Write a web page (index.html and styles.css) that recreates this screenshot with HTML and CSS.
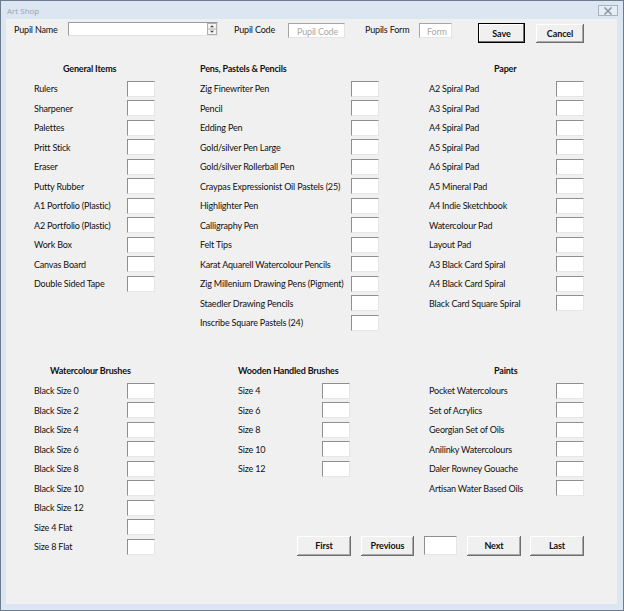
FILE: index.html
```html
<!DOCTYPE html>
<html>
<head>
<meta charset="utf-8">
<title>Art Shop</title>
<link rel="stylesheet" href="styles.css">
</head>
<body>
<div class="window">
  <div class="titlebar">
    <span class="title">Art Shop</span>
    <span class="close"><svg width="10" height="8" viewBox="0 0 10 8"><path d="M1.5 0.5 L8.5 7.5 M8.5 0.5 L1.5 7.5" stroke="#8a96a4" stroke-width="1.6"/></svg></span>
  </div>
  <div class="client">
    <div class="topbar">
      <span class="lbl l-name">Pupil Name</span>
      <div class="combo"><span class="spin"><svg width="10" height="12" viewBox="0 0 10 12"><rect x="0.5" y="0.5" width="9" height="11" fill="#f4f4f4" stroke="#b0b0b0"/><line x1="0.5" y1="6" x2="9.5" y2="6" stroke="#b0b0b0"/><path d="M3 4.2 L5 2.2 L7 4.2 Z" fill="#444"/><path d="M3 7.8 L5 9.8 L7 7.8 Z" fill="#444"/></svg></span></div>
      <span class="lbl l-code">Pupil Code</span>
      <div class="field f-code">Pupil Code</div>
      <span class="lbl l-form">Pupils Form</span>
      <div class="field f-form">Form</div>
      <button class="btn b-save">Save</button>
      <button class="btn b-cancel">Cancel</button>
    </div>

    <div class="group g-top">
      <div class="sec s1">
        <div class="hdr h-general">General Items</div>
        <div class="row"><span>Rulers</span><i class="box"></i></div>
        <div class="row"><span>Sharpener</span><i class="box"></i></div>
        <div class="row"><span>Palettes</span><i class="box"></i></div>
        <div class="row"><span>Pritt Stick</span><i class="box"></i></div>
        <div class="row"><span>Eraser</span><i class="box"></i></div>
        <div class="row"><span>Putty Rubber</span><i class="box"></i></div>
        <div class="row"><span>A1 Portfolio (Plastic)</span><i class="box"></i></div>
        <div class="row"><span>A2 Portfolio (Plastic)</span><i class="box"></i></div>
        <div class="row"><span>Work Box</span><i class="box"></i></div>
        <div class="row"><span>Canvas Board</span><i class="box"></i></div>
        <div class="row"><span>Double Sided Tape</span><i class="box"></i></div>
      </div>
      <div class="sec s2">
        <div class="hdr h-pens">Pens, Pastels &amp; Pencils</div>
        <div class="row"><span>Zig Finewriter Pen</span><i class="box"></i></div>
        <div class="row"><span>Pencil</span><i class="box"></i></div>
        <div class="row"><span>Edding Pen</span><i class="box"></i></div>
        <div class="row"><span>Gold/silver Pen Large</span><i class="box"></i></div>
        <div class="row"><span>Gold/silver Rollerball Pen</span><i class="box"></i></div>
        <div class="row"><span>Craypas Expressionist Oil Pastels (25)</span><i class="box"></i></div>
        <div class="row"><span>Highlighter Pen</span><i class="box"></i></div>
        <div class="row"><span>Calligraphy Pen</span><i class="box"></i></div>
        <div class="row"><span>Felt Tips</span><i class="box"></i></div>
        <div class="row"><span>Karat Aquarell Watercolour Pencils</span><i class="box"></i></div>
        <div class="row"><span>Zig Millenium Drawing Pens (Pigment)</span><i class="box"></i></div>
        <div class="row"><span>Staedler Drawing Pencils</span><i class="box"></i></div>
        <div class="row"><span>Inscribe Square Pastels (24)</span><i class="box"></i></div>
      </div>
      <div class="sec s3">
        <div class="hdr h-paper">Paper</div>
        <div class="row"><span>A2 Spiral Pad</span><i class="box"></i></div>
        <div class="row"><span>A3 Spiral Pad</span><i class="box"></i></div>
        <div class="row"><span>A4 Spiral Pad</span><i class="box"></i></div>
        <div class="row"><span>A5 Spiral Pad</span><i class="box"></i></div>
        <div class="row"><span>A6 Spiral Pad</span><i class="box"></i></div>
        <div class="row"><span>A5 Mineral Pad</span><i class="box"></i></div>
        <div class="row"><span>A4 Indie Sketchbook</span><i class="box"></i></div>
        <div class="row"><span>Watercolour Pad</span><i class="box"></i></div>
        <div class="row"><span>Layout Pad</span><i class="box"></i></div>
        <div class="row"><span>A3 Black Card Spiral</span><i class="box"></i></div>
        <div class="row"><span>A4 Black Card Spiral</span><i class="box"></i></div>
        <div class="row"><span>Black Card Square Spiral</span><i class="box"></i></div>
      </div>
    </div>

    <div class="group g-bottom">
      <div class="sec s1">
        <div class="hdr h-water">Watercolour Brushes</div>
        <div class="row"><span>Black Size 0</span><i class="box"></i></div>
        <div class="row"><span>Black Size 2</span><i class="box"></i></div>
        <div class="row"><span>Black Size 4</span><i class="box"></i></div>
        <div class="row"><span>Black Size 6</span><i class="box"></i></div>
        <div class="row"><span>Black Size 8</span><i class="box"></i></div>
        <div class="row"><span>Black Size 10</span><i class="box"></i></div>
        <div class="row"><span>Black Size 12</span><i class="box"></i></div>
        <div class="row"><span>Size 4 Flat</span><i class="box"></i></div>
        <div class="row"><span>Size 8 Flat</span><i class="box"></i></div>
      </div>
      <div class="right">
        <div class="right-top">
          <div class="sec s-wood">
            <div class="hdr h-wood">Wooden Handled Brushes</div>
            <div class="row"><span>Size 4</span><i class="box"></i></div>
            <div class="row"><span>Size 6</span><i class="box"></i></div>
            <div class="row"><span>Size 8</span><i class="box"></i></div>
            <div class="row"><span>Size 10</span><i class="box"></i></div>
            <div class="row"><span>Size 12</span><i class="box"></i></div>
          </div>
          <div class="sec s-paints">
            <div class="hdr h-paints">Paints</div>
            <div class="row"><span>Pocket Watercolours</span><i class="box"></i></div>
            <div class="row"><span>Set of Acrylics</span><i class="box"></i></div>
            <div class="row"><span>Georgian Set of Oils</span><i class="box"></i></div>
            <div class="row"><span>Anilinky Watercolours</span><i class="box"></i></div>
            <div class="row"><span>Daler Rowney Gouache</span><i class="box"></i></div>
            <div class="row"><span>Artisan Water Based Oils</span><i class="box"></i></div>
          </div>
        </div>
        <div class="nav">
          <button class="btn nb nb-first">First</button>
          <button class="btn nb nb-prev">Previous</button>
          <i class="box page"></i>
          <button class="btn nb nb-next">Next</button>
          <button class="btn nb nb-last">Last</button>
        </div>
      </div>
    </div>
  </div>
</div>
</body>
</html>
```

FILE: styles.css
```css
* { box-sizing: border-box; }
html, body { margin: 0; padding: 0; }
body {
  width: 624px;
  height: 611px;
  font-family: Lato, "Liberation Sans", sans-serif;
  font-size: 9px;
  letter-spacing: -0.18px;
  color: #111;
  overflow: hidden;
}
.window {
  width: 624px;
  height: 611px;
  border: 1px solid #6c7b8e;
  background: #dce6f2;
  display: flex;
  flex-direction: column;
}
.titlebar {
  height: 18px;
  flex: none;
  display: flex;
  align-items: flex-start;
  justify-content: space-between;
  padding: 0 5px 0 6px;
}
.title {
  font-family: "Open Sans", sans-serif;
  font-size: 8px;
  letter-spacing: 0;
  color: #97a3b2;
  line-height: 20px;
}
.close {
  width: 20px;
  height: 11px;
  margin-top: 4px;
  border: 1px solid #a8b3c0;
  background: #e6edf5;
  display: flex;
  align-items: center;
  justify-content: center;
}
.client {
  flex: 1;
  margin: 0 6px 6px 5px;
  background: #f0f0f0;
}
.topbar {
  height: 40px;
  display: flex;
  align-items: flex-start;
}
.lbl {
  line-height: 20px;
  margin-top: 1px;
  white-space: nowrap;
  width: 54px;
}
.l-name { margin-left: 8px; }
.l-code { margin-left: 16px; }
.l-form { margin-left: 20px; }
.combo {
  width: 150px;
  height: 14px;
  margin-top: 3px;
  background: #fff;
  border-top: 1px solid #9a9a9a;
  border-left: 1px solid #9a9a9a;
  border-bottom: 1px solid #e2e2e2;
  border-right: 1px solid #e2e2e2;
  display: flex;
  justify-content: flex-end;
}
.spin { display: block; height: 12px; }
.spin svg { display: block; }
.field {
  height: 15px;
  margin-top: 4px;
  background: #fff;
  border-top: 1px solid #a6a6a6;
  border-left: 1px solid #a6a6a6;
  border-bottom: 1px solid #e4e4e4;
  border-right: 1px solid #e4e4e4;
  color: #a9a9a9;
  line-height: 15px;
  padding-left: 8px;
  white-space: nowrap;
  overflow: hidden;
}
.f-code { width: 57px; }
.f-form { width: 33px; padding-left: 7px; }
.btn {
  font-family: Lato, "Liberation Sans", sans-serif;
  font-weight: bold;
  font-size: 9px;
  letter-spacing: -0.1px;
  color: #111;
  background: #f0f0f0;
  border: none;
  box-shadow: inset -1px -1px 0 #6e6e6e, inset 1px 1px 0 #ffffff, inset -2px -2px 0 #a8a8a8;
  padding: 0;
  margin: 0;
  height: 20px;
}
.b-save {
  width: 47px;
  margin-left: 26px;
  margin-top: 4px;
  box-shadow: inset 0 0 0 1px #000, inset -2px -2px 0 #6e6e6e, inset 2px 2px 0 #ffffff;
}
.b-cancel {
  width: 48px;
  height: 19px;
  margin-left: 11px;
  margin-top: 5px;
}
.group { display: flex; align-items: stretch; }
.g-top { height: 273.5px; }
.g-bottom { margin-top: 28.5px; }
.sec { flex: none; }
.s1 { width: 121px; margin-left: 28px; }
.s2 { width: 179px; margin-left: 45px; }
.s3 { width: 155px; margin-left: 50px; }
.s-wood { width: 112px; margin-left: 83px; }
.s-paints { width: 155px; margin-left: 79px; }
.hdr {
  height: 20px;
  line-height: 20px;
  font-weight: bold;
  white-space: nowrap;
}
.h-general { padding-left: 29px; }
.h-pens { padding-left: 0; }
.h-paper { padding-left: 65px; }
.h-water { padding-left: 16px; }
.h-wood { padding-left: 0; }
.h-paints { padding-left: 65px; }
.row {
  height: 19.5px;
  display: flex;
  align-items: center;
  justify-content: space-between;
  white-space: nowrap;
}
.box {
  display: block;
  width: 28px;
  height: 16px;
  background: #fff;
  border-top: 1px solid #8f8f8f;
  border-left: 1px solid #8f8f8f;
  border-bottom: 1px solid #e6e6e6;
  border-right: 1px solid #e6e6e6;
  flex: none;
}
.right {
  display: flex;
  flex-direction: column;
}
.right-top { display: flex; }
.nav {
  margin-top: auto;
  margin-bottom: 1px;
  margin-left: 142px;
  display: flex;
  align-items: flex-start;
}
.nb { width: 54px; height: 20px; }
.nb-prev { width: 53px; margin-left: 10px; }
.box.page { width: 33px; height: 19px; margin-left: 10px; }
.nb-next { margin-left: 10px; }
.nb-last { margin-left: 9px; }
```
